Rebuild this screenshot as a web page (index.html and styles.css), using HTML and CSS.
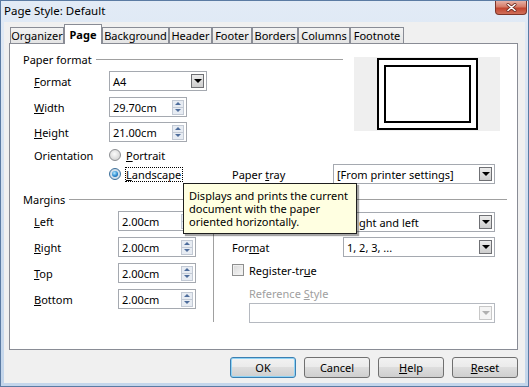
FILE: index.html
```html
<!DOCTYPE html>
<html lang="en">
<head>
    <meta charset="UTF-8">
    <title>Page Style: Default</title>
    <link rel="stylesheet" href="styles.css">
</head>
<body>
    <div class="window">
        <div class="titlebar">
            <span class="title">Page Style: Default</span>
            <span class="close">
                <svg width="11" height="9" viewBox="0 0 11 9">
                    <path d="M2 1.5 L9 7.5 M9 1.5 L2 7.5" stroke="#6a2a20" stroke-width="3" stroke-linecap="round"/>
                    <path d="M2 1.5 L9 7.5 M9 1.5 L2 7.5" stroke="#fff" stroke-width="1.6" stroke-linecap="round"/>
                </svg>
            </span>
        </div>

        <div class="client">
            <!-- tab strip -->
            <div class="tabs">
                <div class="tab tab-organizer">Organizer</div>
                <div class="tab tab-page active">Page</div>
                <div class="tab tab-background">Background</div>
                <div class="tab tab-header">Header</div>
                <div class="tab tab-footer">Footer</div>
                <div class="tab tab-borders">Borders</div>
                <div class="tab tab-columns">Columns</div>
                <div class="tab tab-footnote">Footnote</div>
            </div>

            <div class="panel">
                <!-- Paper format -->
                <div class="top">
                    <div class="paper">
                        <div class="group-head"><span>Paper format</span><span class="line"></span></div>
                        <div class="row row-format">
                            <span class="label"><u>F</u>ormat</span>
                            <div class="field select select-format"><span>A4</span><span class="drop"></span></div>
                        </div>
                        <div class="row row-width">
                            <span class="label"><u>W</u>idth</span>
                            <div class="field spin-field"><span>29.70cm</span><span class="spin"><i class="up"></i><i class="down"></i></span></div>
                        </div>
                        <div class="row row-height">
                            <span class="label"><u>H</u>eight</span>
                            <div class="field spin-field"><span>21.00cm</span><span class="spin"><i class="up"></i><i class="down"></i></span></div>
                        </div>
                    </div>
                    <div class="preview">
                        <div class="sheet"><div class="sheet-inner"></div></div>
                    </div>
                </div>

                <div class="row orient-row">
                    <span class="label">Orientation</span>
                    <span class="radio"></span>
                    <span class="radio-text"><u>P</u>ortrait</span>
                </div>
                <div class="row landscape-row">
                    <span class="label"></span>
                    <div class="choice">
                        <span class="radio checked"></span>
                        <span class="focus"><u>L</u>andscape</span>
                    </div>
                    <span class="tray-label">Paper <u>t</u>ray</span>
                    <div class="field select select-tray"><span>[From printer settings]</span><span class="drop"></span></div>
                </div>

                <div class="bottom">
                    <!-- Margins -->
                    <div class="margins">
                        <div class="group-head"><span>Margins</span><span class="line"></span></div>
                        <div class="row mrow first">
                            <span class="label"><u>L</u>eft</span>
                            <div class="field spin-field"><span>2.00cm</span><span class="spin"><i class="up"></i><i class="down"></i></span></div>
                        </div>
                        <div class="row mrow">
                            <span class="label"><u>R</u>ight</span>
                            <div class="field spin-field"><span>2.00cm</span><span class="spin"><i class="up"></i><i class="down"></i></span></div>
                        </div>
                        <div class="row mrow">
                            <span class="label"><u>T</u>op</span>
                            <div class="field spin-field"><span>2.00cm</span><span class="spin"><i class="up"></i><i class="down"></i></span></div>
                        </div>
                        <div class="row mrow">
                            <span class="label"><u>B</u>ottom</span>
                            <div class="field spin-field"><span>2.00cm</span><span class="spin"><i class="up"></i><i class="down"></i></span></div>
                        </div>
                    </div>

                    <div class="vsep"></div>

                    <!-- Layout settings (its caption sits under the tooltip) -->
                    <div class="layout">
                        <div class="group-head layout-head"><span class="line"></span></div>
                        <div class="row lrow first">
                            <span class="label"></span>
                            <div class="field select select-layout"><span class="clip">ght and left</span><span class="drop"></span></div>
                        </div>
                        <div class="row lrow">
                            <span class="label">For<u>m</u>at</span>
                            <div class="field select select-layout"><span>1, 2, 3, ...</span><span class="drop"></span></div>
                        </div>
                        <div class="row check-row">
                            <span class="check"></span>
                            <span>Register-tr<u>u</u>e</span>
                        </div>
                        <div class="ref-label">Reference <u>S</u>tyle</div>
                        <div class="ref-select">
                            <div class="field select disabled"><span></span><span class="drop"></span></div>
                        </div>
                    </div>
                </div>
            </div>

            <div class="buttons">
                <button class="btn default">OK</button>
                <button class="btn">Cancel</button>
                <button class="btn"><u>H</u>elp</button>
                <button class="btn"><u>R</u>eset</button>
            </div>
        </div>

        <div class="tooltip">Displays and prints the current document with the paper oriented horizontally.</div>
    </div>
</body>
</html>
```

FILE: styles.css
```css
* {
    box-sizing: border-box;
}
body {
    margin: 0;
    font-family: "Noto Sans", "Open Sans", sans-serif;
    font-size: 11px;
    color: #000;
    background: #fff;
}
u {
    text-decoration: underline;
    text-underline-offset: 1px;
}

/* window frame */
.window {
    position: relative;
    width: 529px;
    height: 387px;
    border: 1px solid #5b7ba3;
    background: linear-gradient(#e2ebf6, #cddcee 60%, #c4d6eb);
    padding: 0 3px 3px 3px;
    display: flex;
    flex-direction: column;
}
.titlebar {
    height: 21px;
    display: flex;
    justify-content: space-between;
    align-items: flex-start;
}
.title {
    margin-top: 2px;
    font-size: 11.5px;
}
.close {
    width: 32px;
    height: 14px;
    margin-right: -2px;
    border: 1px solid #7d3528;
    border-top: none;
    border-radius: 0 0 4px 4px;
    background: linear-gradient(#e6b1a6, #d57b67 45%, #c2452f 55%, #d0705a);
    display: flex;
    align-items: center;
    justify-content: center;
}
.client {
    flex: 1;
    background: #f0f0f0;
    padding: 2px 7px 0 5px;
}

/* tabs */
.tabs {
    display: flex;
    align-items: flex-end;
    height: 19px;
    padding-left: 1px;
}
.tab {
    height: 16px;
    border: 1px solid #898c95;
    border-bottom: none;
    background: linear-gradient(#f3f3f3, #e4e4e4);
    display: flex;
    align-items: center;
    justify-content: center;
    white-space: nowrap;
}
.tab.active {
    height: 20px;
    margin-bottom: -1px;
    background: #fff;
    font-weight: bold;
    position: relative;
    z-index: 1;
}
.tab-organizer { width: 54px; }
.tab-page { width: 38px; }
.tab-background { width: 67px; }
.tab-header { width: 43px; }
.tab-footer { width: 40px; }
.tab-borders { width: 46px; }
.tab-columns { width: 52px; }
.tab-footnote { width: 54px; }

.panel {
    height: 307px;
    border: 1px solid #898c95;
    background: #fff;
    padding: 8px 0 0 13px;
}

/* groups and rows */
.group-head {
    display: flex;
    align-items: center;
    height: 15px;
    white-space: nowrap;
}
.group-head .line {
    flex: 1;
    height: 1px;
    margin-left: 4px;
    background: #a0a0a0;
}
.row {
    display: flex;
    align-items: center;
    height: 20px;
    padding-left: 11px;
    white-space: nowrap;
}
.label {
    width: 75px;
    flex-shrink: 0;
}

.top {
    display: flex;
    align-items: flex-start;
}
.paper {
    width: 320px;
}
.row-format { margin-top: 4px; }
.row-width { margin-top: 6px; }
.row-height { margin-top: 5px; }

.preview {
    margin-left: 11px;
    margin-top: 5px;
    width: 146px;
    height: 74px;
    background: #efefef;
    display: flex;
    align-items: center;
    justify-content: center;
}
.sheet {
    width: 101px;
    height: 72px;
    border: 2px solid #000;
    padding: 5px;
    background: #fff;
}
.sheet-inner {
    height: 100%;
    border: 2px solid #000;
}

/* inputs */
.field {
    height: 20px;
    border: 1px solid #a5a9b0;
    background: #fff;
    display: flex;
    align-items: center;
    padding-left: 3px;
}
.spin-field {
    width: 78px;
}
.spin {
    margin-left: auto;
    margin-right: 2px;
    width: 12px;
    height: 15px;
    display: flex;
    flex-direction: column;
    border: 1px solid #c2c9d4;
    background: #e7ecf3;
}
.spin i {
    flex: 1;
    display: flex;
    align-items: center;
    justify-content: center;
}
.spin i.up {
    border-bottom: 1px solid #c2c9d4;
}
.spin i.up::after {
    content: "";
    border-left: 3px solid transparent;
    border-right: 3px solid transparent;
    border-bottom: 3px solid #4e6d9c;
}
.spin i.down::after {
    content: "";
    border-left: 3px solid transparent;
    border-right: 3px solid transparent;
    border-top: 3px solid #4e6d9c;
}
.select {
    justify-content: space-between;
    padding-right: 2px;
}
.select-format { width: 98px; }
.select-tray { width: 162px; }
.select-layout { width: 152px; }
.clip {
    margin-left: 12px;
}
.drop {
    width: 13px;
    height: 14px;
    border: 1px solid #6f7074;
    background: linear-gradient(#ececec, #cdcdcd);
    display: flex;
    align-items: center;
    justify-content: center;
}
.drop::after {
    content: "";
    border-left: 4px solid transparent;
    border-right: 4px solid transparent;
    border-top: 4px solid #000;
}

/* orientation */
.orient-row {
    margin-top: 4px;
    height: 18px;
}
.radio {
    width: 12px;
    height: 12px;
    border-radius: 50%;
    border: 1px solid #8c8e92;
    background: radial-gradient(circle at 45% 40%, #fbfbfb, #dcdcdc 60%, #c4c4c4);
    display: flex;
    align-items: center;
    justify-content: center;
    flex-shrink: 0;
}
.radio.checked {
    border-color: #3c6f99;
    background: radial-gradient(circle, #e8f1f8, #c2d3e2);
}
.radio.checked::after {
    content: "";
    width: 6px;
    height: 6px;
    border-radius: 50%;
    background: radial-gradient(circle at 40% 35%, #b8ecff, #2b8ad0 55%, #0f4a86);
}
.radio-text {
    margin-left: 5px;
}
.choice {
    width: 123px;
    display: flex;
    align-items: center;
}
.focus {
    margin-left: 4px;
    border: 1px dotted #000;
    line-height: 13px;
    padding-right: 1px;
}
.tray-label {
    width: 101px;
}

/* margins + layout */
.bottom {
    display: flex;
    margin-top: 8px;
}
.margins {
    width: 190px;
}
.margins .label {
    width: 84px;
}
.mrow { margin-top: 6px; }
.mrow.first { margin-top: 4px; }
.vsep {
    width: 1px;
    height: 117px;
    margin-top: 13px;
    background: #a0a0a0;
}
.layout {
    width: 293px;
}
.layout-head {
    padding-left: 10px;
}
.lrow {
    padding-left: 18px;
    margin-top: 5px;
}
.lrow .label {
    width: 111px;
}
.check-row {
    padding-left: 18px;
    margin-top: 4px;
    height: 18px;
}
.check {
    width: 12px;
    height: 12px;
    margin-right: 5px;
    border: 1px solid #8e8f8f;
    background: linear-gradient(135deg, #d8d8d8, #f7f7f7);
    box-shadow: inset 0 0 0 1px #f0f0f0;
}
.ref-label {
    margin-top: 7px;
    height: 15px;
    line-height: 15px;
    padding-left: 35px;
    color: #a0a0a0;
}
.ref-select {
    margin-top: 2px;
    padding-left: 35px;
}
.select.disabled {
    width: 246px;
    border-color: #b5b9c0;
}
.select.disabled .drop {
    border-color: #c8c8c8;
    background: #f4f4f4;
}
.select.disabled .drop::after {
    border-top-color: #b0b0b0;
}

/* dialog buttons */
.buttons {
    display: flex;
    justify-content: flex-end;
    gap: 8px;
    margin-top: 7px;
}
.btn {
    width: 66px;
    height: 21px;
    padding: 0;
    font-family: inherit;
    font-size: 11px;
    color: #000;
    border: 1px solid #707070;
    border-radius: 3px;
    background: linear-gradient(#f2f2f2, #ebebeb 45%, #dddddd 50%, #cfcfcf);
}
.btn.default {
    border-color: #3c7fb1;
    box-shadow: inset 0 0 0 1px #8fd3f5;
}

/* tooltip over the panel */
.tooltip {
    position: absolute;
    left: 182px;
    top: 182px;
    width: 174px;
    height: 51px;
    padding: 5px 5px;
    border: 1px solid #1e1e1e;
    background: #ffffe1;
    line-height: 13px;
    box-shadow: 2px 2px 1px rgba(0, 0, 0, 0.35);
    z-index: 5;
}
```
